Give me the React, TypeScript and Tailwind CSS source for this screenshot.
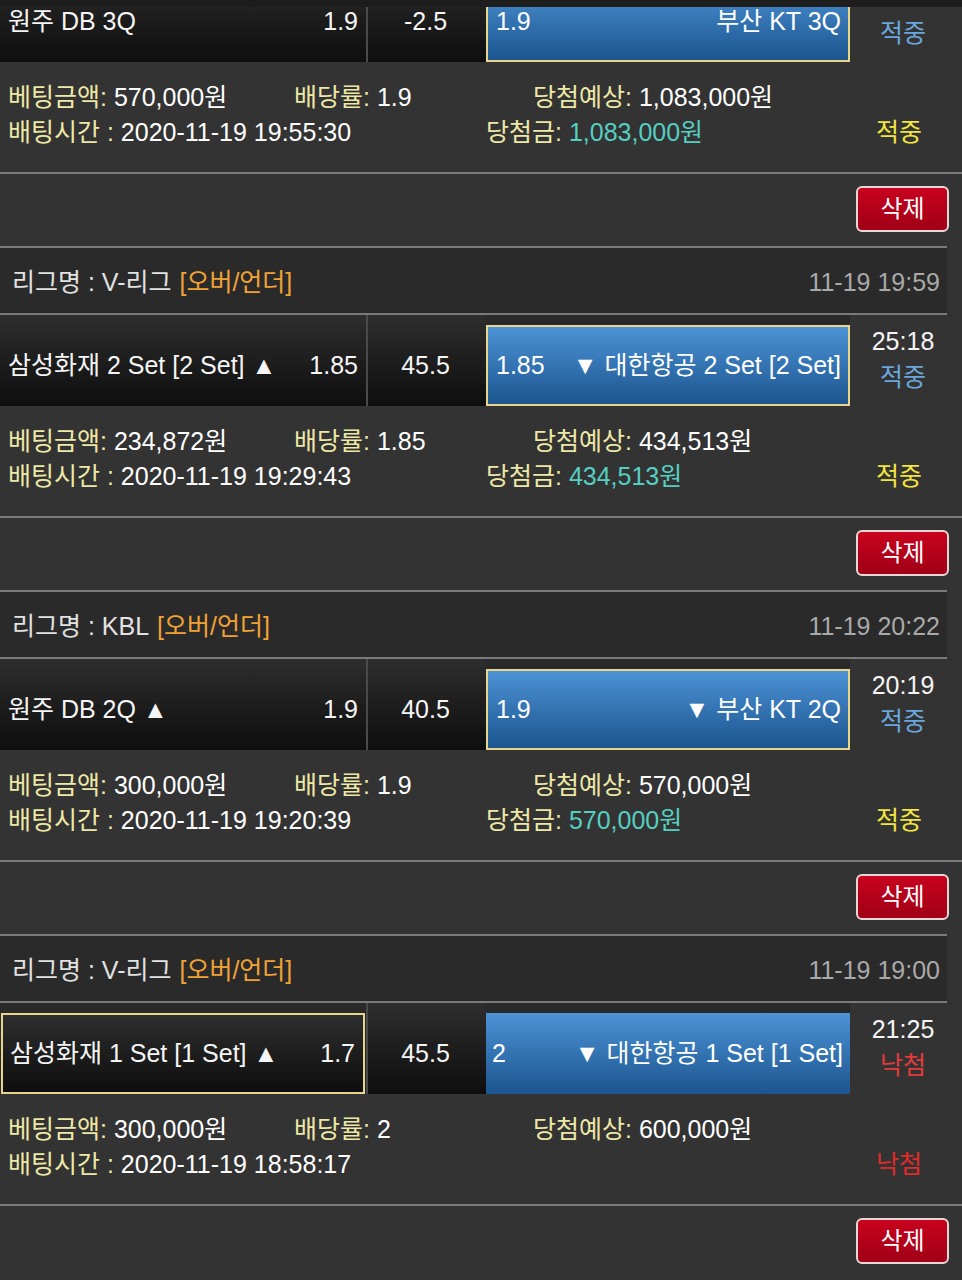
import React from "react";

type Bet = {
  league?: string;
  date?: string;
  home: string;
  homeOdds: string;
  line: string;
  away: string;
  awayOdds: string;
  pick: "home" | "away";
  time?: string;
  win: boolean;
  amount: string;
  rate: string;
  expect: string;
  betTime: string;
  prize?: string;
};

// first entry is scrolled partly out of view, so it has no header / time
const bets: Bet[] = [
  {
    home: "원주 DB 3Q",
    homeOdds: "1.9",
    line: "-2.5",
    away: "부산 KT 3Q",
    awayOdds: "1.9",
    pick: "away",
    win: true,
    amount: "570,000원",
    rate: "1.9",
    expect: "1,083,000원",
    betTime: "2020-11-19 19:55:30",
    prize: "1,083,000원",
  },
  {
    league: "V-리그",
    date: "11-19 19:59",
    home: "삼성화재 2 Set [2 Set] ▲",
    homeOdds: "1.85",
    line: "45.5",
    away: "▼ 대한항공 2 Set [2 Set]",
    awayOdds: "1.85",
    pick: "away",
    time: "25:18",
    win: true,
    amount: "234,872원",
    rate: "1.85",
    expect: "434,513원",
    betTime: "2020-11-19 19:29:43",
    prize: "434,513원",
  },
  {
    league: "KBL",
    date: "11-19 20:22",
    home: "원주 DB 2Q ▲",
    homeOdds: "1.9",
    line: "40.5",
    away: "▼ 부산 KT 2Q",
    awayOdds: "1.9",
    pick: "away",
    time: "20:19",
    win: true,
    amount: "300,000원",
    rate: "1.9",
    expect: "570,000원",
    betTime: "2020-11-19 19:20:39",
    prize: "570,000원",
  },
  {
    league: "V-리그",
    date: "11-19 19:00",
    home: "삼성화재 1 Set [1 Set] ▲",
    homeOdds: "1.7",
    line: "45.5",
    away: "▼ 대한항공 1 Set [1 Set]",
    awayOdds: "2",
    pick: "home",
    time: "21:25",
    win: false,
    amount: "300,000원",
    rate: "2",
    expect: "600,000원",
    betTime: "2020-11-19 18:58:17",
  },
];

function BetCard({ bet }: { bet: Bet }) {
  const homePicked = bet.pick === "home";
  const awayPicked = bet.pick === "away";

  return (
    <div>
      {/* league header */}
      {bet.league ? (
        <div className="w-[947px] h-[69px] border-y-2 border-[#7a7a7a] bg-[#2a2a2a] flex items-center justify-between pl-[12px] pr-[7px] pt-[5px]">
          <div className="flex items-center">
            <span className="text-[#e2e2e2]">리그명 : {bet.league}</span>
            <span className="ml-[8px] text-[#f0a235]">[오버/언더]</span>
          </div>
          <span className="text-[#a9a9a9]">{bet.date}</span>
        </div>
      ) : null}

      {/* match row */}
      <div className="flex h-[91px]">
        <div className="w-[366px] bg-[#292929]">
          {homePicked ? (
            <div className="mt-[10px] ml-[1px] h-[81px] w-[364px] border-2 border-[#e6d58a] bg-linear-to-b from-[#2e2e2e] to-[#0e0e0e] flex items-center justify-between pl-[7px] pr-[8px] text-[#f5f5f5]">
              <span>{bet.home}</span>
              <span>{bet.homeOdds}</span>
            </div>
          ) : (
            <div className="h-full bg-linear-to-b from-[#2e2e2e] to-[#0e0e0e] flex items-center justify-between pt-[10px] pl-[8px] pr-[8px] text-[#f5f5f5]">
              <span>{bet.home}</span>
              <span>{bet.homeOdds}</span>
            </div>
          )}
        </div>
        <div className="w-[2px] bg-[#4a4a4a]" />
        <div className="w-[118px] bg-linear-to-b from-[#2e2e2e] to-[#0e0e0e] flex items-center justify-center pt-[10px] pr-[3px] text-[#f5f5f5]">
          {bet.line}
        </div>
        <div className="w-[364px] bg-[#292929]">
          <div
            className={
              awayPicked
                ? "mt-[10px] h-[81px] border-2 border-[#e6d58a] bg-linear-to-b from-[#4c93d6] to-[#1c558f] flex items-center justify-between pl-[8px] pr-[7px] text-white"
                : "mt-[10px] h-[81px] bg-linear-to-b from-[#4c93d6] to-[#1c558f] flex items-center justify-between pl-[6px] pr-[7px] text-white"
            }
          >
            <span>{bet.awayOdds}</span>
            <span>{bet.away}</span>
          </div>
        </div>
        <div className="flex-1 flex flex-col items-center pt-[8px] pr-[6px] leading-[36px]">
          <span className="h-[36px] text-[#f5f5f5]">{bet.time}</span>
          <span className={bet.win ? "text-[#6aa6dc]" : "text-[#e23a3a]"}>{bet.win ? "적중" : "낙첨"}</span>
        </div>
      </div>

      {/* details */}
      <div className="pt-[18px] pb-[22px] pl-[8px] leading-[35px]">
        <div className="flex">
          <span className="w-[286px]">
            <span className="text-[#ede8a6]">베팅금액:</span> <span className="text-white">{bet.amount}</span>
          </span>
          <span className="w-[239px]">
            <span className="text-[#ede8a6]">배당률:</span> <span className="text-white">{bet.rate}</span>
          </span>
          <span>
            <span className="text-[#ede8a6]">당첨예상:</span> <span className="text-white">{bet.expect}</span>
          </span>
        </div>
        <div className="flex">
          <span className="w-[478px]">
            <span className="text-[#ede8a6]">배팅시간 :</span> <span className="text-white">{bet.betTime}</span>
          </span>
          <span className="w-[390px]">
            {bet.prize ? (
              <>
                <span className="text-[#ede8a6]">당첨금:</span> <span className="text-[#55cfc2]">{bet.prize}</span>
              </>
            ) : null}
          </span>
          <span className={bet.win ? "text-[#f2e43e]" : "text-[#e02a2a]"}>{bet.win ? "적중" : "낙첨"}</span>
        </div>
      </div>

      <div className="h-[2px] bg-[#7a7a7a]" />

      {/* delete */}
      <div className="h-[72px] flex items-center justify-end pr-[13px] pb-[3px]">
        <button className="w-[93px] h-[46px] rounded-[6px] border-2 border-[#ecd6d6] bg-linear-to-b from-[#c8021e] to-[#a00016] text-white text-[24px] leading-none">
          삭제
        </button>
      </div>
    </div>
  );
}

export default function App() {
  return (
    <div className="relative h-[1280px] overflow-hidden bg-[#333333] text-[25px] font-['Liberation_Sans','Noto_Sans_CJK_KR',sans-serif]">
      <div className="mt-[-29px]">
        {bets.map((bet, i) => (
          <BetCard key={i} bet={bet} />
        ))}
      </div>
      <div className="absolute top-0 left-0 right-0 h-[7px] bg-[#1d1d1d]" />
    </div>
  );
}
